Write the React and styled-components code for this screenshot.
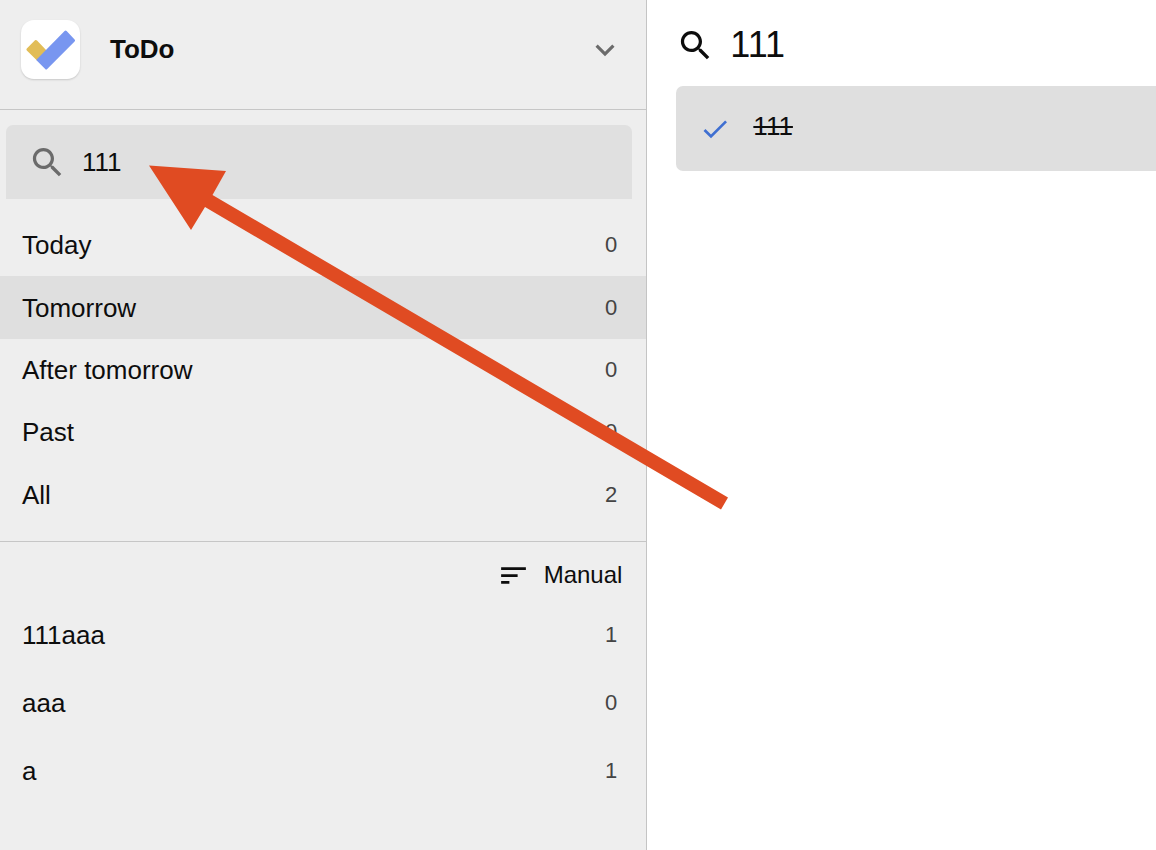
import React, { useState } from "react";
import styled, { createGlobalStyle } from "styled-components";

const GlobalStyle = createGlobalStyle`
  *, *::before, *::after { box-sizing: border-box; }
  body {
    margin: 0;
    background: #fff;
    color: #0d0d0d;
    font-family: "Liberation Sans", Helvetica, Arial, sans-serif;
    font-size: 26px;
    line-height: 32px;
  }
  button, input { font: inherit; color: inherit; }
`;

const Layout = styled.div`
  position: relative;
  display: flex;
  min-height: 100vh;
`;

const Sidebar = styled.aside`
  flex: 0 0 56%;
  background: #eee;
  border-right: 1px solid #c4c4c4;
`;

const AppHeader = styled.header`
  display: flex;
  align-items: center;
  gap: 30px;
  padding: 20px 22px 30px 21px;
  border-bottom: 1px solid #c6c6c6;
`;

const Logo = styled.span`
  display: flex;
  width: 59px;
  height: 59px;
  border-radius: 13px;
  background: #fff;
  box-shadow: 0 1px 2px rgba(0, 0, 0, 0.16);
`;

const AppTitle = styled.h1`
  flex: 1;
  margin: 0;
  padding-bottom: 2px;
  font-size: 26px;
  line-height: 32px;
  font-weight: 700;
`;

const IconButton = styled.button`
  display: flex;
  padding: 0;
  border: 0;
  background: none;
  color: #6b6b6b;
  cursor: pointer;
`;

const Icon = styled.svg`
  display: block;
  flex: none;
  width: ${(p) => p.$size}px;
  height: ${(p) => p.$size}px;
  fill: currentColor;
`;

const SearchField = styled.label`
  display: flex;
  align-items: center;
  gap: 15px;
  margin: 15px 14px 0 6px;
  padding: 17px 22px;
  border-radius: 7px 7px 0 0;
  background: #e0e0e0;
  color: #6b6b6b;
`;

const SearchInput = styled.input`
  flex: 1;
  min-width: 0;
  height: 40px;
  padding: 0;
  border: 0;
  outline: 0;
  background: transparent;
  color: #0d0d0d;
`;

const DayList = styled.ul`
  display: grid;
  grid-auto-rows: 1fr;
  height: 343px;
  margin: 0;
  padding: 15px 0;
  list-style: none;
  border-bottom: 1px solid #c6c6c6;
`;

const CustomList = styled.ul`
  display: grid;
  grid-auto-rows: 68px;
  margin: 0;
  padding: 0;
  list-style: none;
`;

const ListItem = styled.li`
  display: flex;
`;

const ListButton = styled.button`
  flex: 1;
  display: flex;
  align-items: center;
  justify-content: space-between;
  padding: 0 29px 0 22px;
  border: 0;
  background: ${(p) => (p.$selected ? "#dfdfdf" : "transparent")};
  text-align: left;
  cursor: pointer;
`;

const Count = styled.span`
  font-size: 22px;
  color: #444;
`;

const SortBar = styled.div`
  display: flex;
  justify-content: flex-end;
  padding: 9px 24px 2px;
`;

const SortButton = styled.button`
  display: flex;
  align-items: center;
  gap: 14px;
  height: 48px;
  padding: 0;
  border: 0;
  background: none;
  font-size: 24px;
  cursor: pointer;
`;

const Main = styled.main`
  flex: 1;
  min-width: 0;
  padding-left: 29px;
`;

const MainHeader = styled.header`
  display: flex;
  align-items: center;
  gap: 15px;
  padding: 21px 0 17px;
`;

const MainTitle = styled.h2`
  margin: 0;
  font-size: 36px;
  line-height: 48px;
  font-weight: 400;
`;

const Task = styled.label`
  display: flex;
  align-items: center;
  gap: 22px;
  padding: 24px 23px;
  border-radius: 7px 0 0 7px;
  background: #dfdfdf;
  cursor: pointer;
`;

const Tick = styled.span`
  display: grid;
  color: #3f6fd1;

  > * { grid-area: 1 / 1; }
`;

const TickInput = styled.input`
  appearance: none;
  width: 32px;
  height: 32px;
  margin: 0;

  &:not(:checked) + svg { visibility: hidden; }
`;

const TaskName = styled.span`
  padding-bottom: 5px;
  text-decoration: ${(p) => (p.$done ? "line-through" : "none")};
  text-decoration-thickness: 2px;
`;

const Arrow = styled.svg`
  position: absolute;
  top: 0;
  left: 0;
  pointer-events: none;
`;

const SearchIcon = () => (
  <Icon $size={39} viewBox="0 0 24 24" aria-hidden="true">
    <path d="M15.5 14h-.79l-.28-.27C15.41 12.59 16 11.11 16 9.5 16 5.91 13.09 3 9.5 3S3 5.91 3 9.5 5.91 16 9.5 16c1.61 0 3.09-.59 4.23-1.57l.27.28v.79l5 4.99L20.49 19l-4.99-5zm-6 0C7.01 14 5 11.99 5 9.5S7.01 5 9.5 5 14 7.01 14 9.5 11.99 14 9.5 14z" />
  </Icon>
);

const days = [
  ["Today", 0],
  ["Tomorrow", 0],
  ["After tomorrow", 0],
  ["Past", 0],
  ["All", 2],
];

const customLists = [
  ["111aaa", 1],
  ["aaa", 0],
  ["a", 1],
];

function Entry({ name, count, selected, onSelect }) {
  return (
    <ListItem>
      <ListButton type="button" $selected={selected} onClick={onSelect}>
        <span>{name}</span>
        <Count>{count}</Count>
      </ListButton>
    </ListItem>
  );
}

export default function App() {
  const [query, setQuery] = useState("111");
  const [selected, setSelected] = useState("Tomorrow");
  const [done, setDone] = useState(true);

  const entries = (items) =>
    items.map(([name, count]) => (
      <Entry
        key={name}
        name={name}
        count={count}
        selected={selected === name}
        onSelect={() => setSelected(name)}
      />
    ));

  return (
    <>
      <GlobalStyle />
      <Layout>
        <Sidebar>
          <AppHeader>
            <Logo>
              <svg width="59" height="59" viewBox="0 0 59 59" aria-hidden="true">
                <path
                  d="M14 20.3 L5.8 28.6 Q4.9 29.5 5.8 30.4 L16 40.5 L26 31 L16 20.5 Q15 19.4 14 20.3Z"
                  fill="#e2bd57"
                />
                <path
                  d="M43.6 11 L15.6 39.4 Q15.2 39.9 15.7 40.4 L24.2 49 Q25.2 50 26.2 49 L53.6 21.4 Q54.6 20.4 53.6 19.4 L45.6 11 Q44.6 10 43.6 11Z"
                  fill="#7896f0"
                />
              </svg>
            </Logo>
            <AppTitle>ToDo</AppTitle>
            <IconButton type="button" aria-label="Account menu">
              <Icon $size={38} viewBox="0 0 24 24" aria-hidden="true">
                <path d="M7.41 8.59 12 13.17l4.59-4.58L18 10l-6 6-6-6 1.41-1.41z" />
              </Icon>
            </IconButton>
          </AppHeader>

          <SearchField>
            <SearchIcon />
            <SearchInput
              type="text"
              aria-label="Search"
              value={query}
              onChange={(e) => setQuery(e.target.value)}
            />
          </SearchField>

          <DayList>{entries(days)}</DayList>

          <SortBar>
            <SortButton type="button">
              <Icon $size={33} viewBox="0 0 24 24" aria-hidden="true">
                <path d="M3 18h6v-2H3v2zM3 6v2h18V6H3zm0 7h12v-2H3v2z" />
              </Icon>
              Manual
            </SortButton>
          </SortBar>

          <CustomList>{entries(customLists)}</CustomList>
        </Sidebar>

        <Main>
          <MainHeader>
            <SearchIcon />
            <MainTitle>{query}</MainTitle>
          </MainHeader>
          <Task>
            <Tick>
              <TickInput
                type="checkbox"
                checked={done}
                onChange={(e) => setDone(e.target.checked)}
              />
              <Icon $size={32} viewBox="0 0 24 24" aria-hidden="true">
                <path d="M9 16.17 4.83 12l-1.42 1.41L9 19 21 7l-1.41-1.41L9 16.17z" />
              </Icon>
            </Tick>
            <TaskName $done={done}>111</TaskName>
          </Task>
        </Main>

        <Arrow width="740" height="520" viewBox="0 0 740 520" aria-hidden="true">
          <path
            d="M149 165.5 L226 171 L212.5 195 L728 497.5 L721 509.5 L205 207 L191 230Z"
            fill="#e04b22"
          />
        </Arrow>
      </Layout>
    </>
  );
}
